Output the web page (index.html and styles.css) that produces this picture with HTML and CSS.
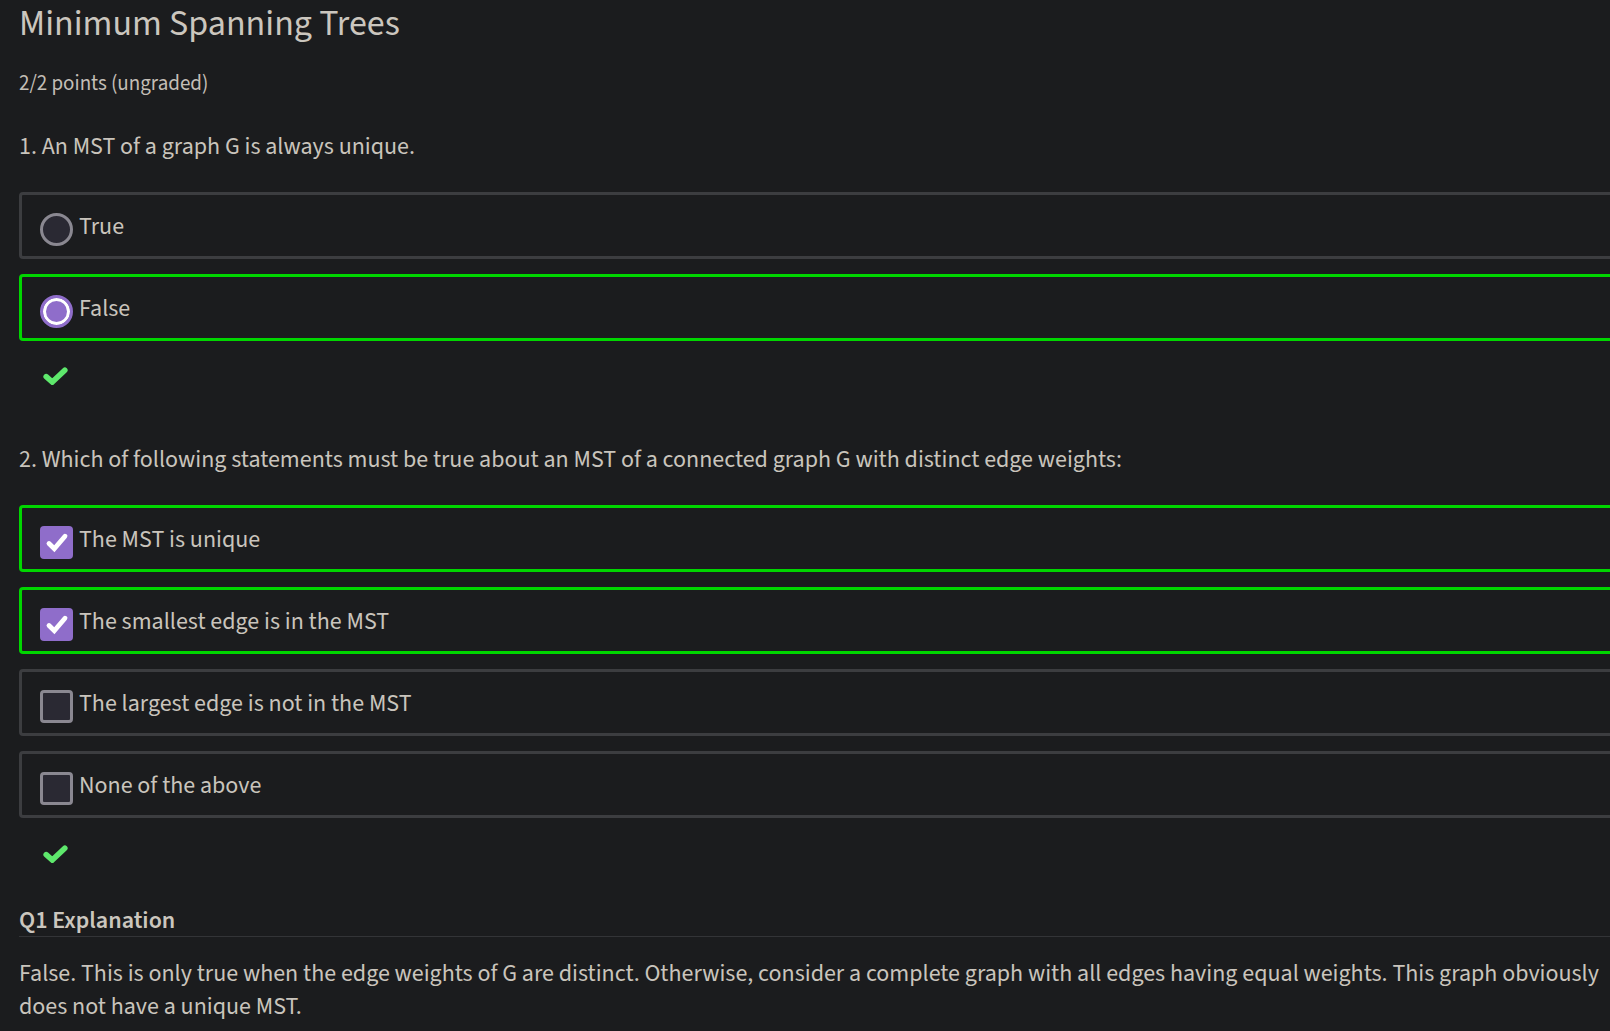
FILE: index.html
```html
<!DOCTYPE html>
<html lang="en">
<head>
<meta charset="utf-8">
<title>Minimum Spanning Trees</title>
<link rel="stylesheet" href="styles.css">
</head>
<body>
<main class="page">
  <h1 class="title">Minimum Spanning Trees</h1>
  <div class="points">2/2 points (ungraded)</div>

  <section class="question">
    <div class="prompt">1. An MST of a graph G is always unique.</div>
    <div class="options">
      <label class="option">
        <span class="radio"></span>
        <span class="option-text">True</span>
      </label>
      <label class="option option-correct">
        <span class="radio radio-on"></span>
        <span class="option-text">False</span>
      </label>
    </div>
    <div class="result">
      <svg class="ok" width="25" height="18" viewBox="0 0 25 18"><path d="M3.2 9.6 L9.3 15 L21.8 3.2" fill="none" stroke="#5ee86c" stroke-width="5.6" stroke-linecap="round" stroke-linejoin="miter"/></svg>
    </div>
  </section>

  <section class="question question-second">
    <div class="prompt">2. Which of following statements must be true about an MST of a connected graph G with distinct edge weights:</div>
    <div class="options">
      <label class="option option-correct">
        <span class="box box-on"><svg width="33" height="33" viewBox="0 0 33 33"><path d="M9 17.5 L14.3 22.8 L25 10.2" fill="none" stroke="#fff" stroke-width="4.8" stroke-linecap="round" stroke-linejoin="miter"/></svg></span>
        <span class="option-text">The MST is unique</span>
      </label>
      <label class="option option-correct">
        <span class="box box-on"><svg width="33" height="33" viewBox="0 0 33 33"><path d="M9 17.5 L14.3 22.8 L25 10.2" fill="none" stroke="#fff" stroke-width="4.8" stroke-linecap="round" stroke-linejoin="miter"/></svg></span>
        <span class="option-text">The smallest edge is in the MST</span>
      </label>
      <label class="option">
        <span class="box"></span>
        <span class="option-text">The largest edge is not in the MST</span>
      </label>
      <label class="option">
        <span class="box"></span>
        <span class="option-text">None of the above</span>
      </label>
    </div>
    <div class="result result-last">
      <svg class="ok" width="25" height="18" viewBox="0 0 25 18"><path d="M3.2 9.6 L9.3 15 L21.8 3.2" fill="none" stroke="#5ee86c" stroke-width="5.6" stroke-linecap="round" stroke-linejoin="miter"/></svg>
    </div>
  </section>

  <section class="explain">
    <h2 class="explain-title">Q1 Explanation</h2>
    <p class="explain-text">False. This is only true when the edge weights of G are distinct. Otherwise, consider a complete graph with all edges having equal weights. This graph obviously does not have a unique MST.</p>
  </section>
</main>
</body>
</html>
```
FILE: styles.css
```css
html, body {
  margin: 0;
  padding: 0;
  overflow: hidden;
  background: #1b1c1e;
}

body {
  font-family: "Source Sans 3", Lato, "Liberation Sans", sans-serif;
  color: #c9c4bc;
  font-size: 24px;
}

.page {
  width: 1625px;
  padding: 0 0 0 19px;
}

.title {
  margin: 2px 0 0;
  font-size: 36px;
  line-height: 44px;
  font-weight: 400;
  color: #cbc6be;
}

.points {
  margin-top: 21px;
  font-size: 21px;
  line-height: 32px;
  color: #c3beb6;
}

.prompt {
  margin-top: 30px;
  line-height: 36px;
}

.question-second .prompt {
  margin-top: 57px;
}

.options {
  margin-top: 27px;
  display: flex;
  flex-direction: column;
  gap: 15px;
}

.question-second .options {
  margin-top: 27px;
}

.option {
  display: flex;
  align-items: flex-start;
  border: 3px solid #3c3d40;
  border-radius: 4px;
  padding: 14px 18px 10px;
  line-height: 36px;
}

.option-correct {
  border-color: #00d600;
}

.radio {
  flex: none;
  box-sizing: border-box;
  width: 33px;
  height: 33px;
  margin-top: 4px;
  margin-right: 6px;
  border-radius: 50%;
  border: 3px solid #8a8891;
  background: #2a2933;
}

.radio-on {
  border-color: #8f6dca;
  background: #8f6dca;
  box-shadow: inset 0 0 0 3px #ffffff;
}

.box {
  flex: none;
  box-sizing: border-box;
  width: 33px;
  height: 33px;
  margin-top: 4px;
  margin-right: 6px;
  border-radius: 4px;
  border: 3px solid #8a8891;
  background: #2a2933;
  display: flex;
}

.box-on {
  border: 0;
  background: #8f6dca;
}

.result {
  margin-top: 26px;
  padding-left: 24px;
  height: 18px;
}

.result-last {
  margin-top: 27px;
}

.ok {
  display: block;
}

.explain-title {
  margin: 43px 0 0;
  font-size: 24px;
  font-weight: 600;
  line-height: 30px;
  border-bottom: 1px solid #333437;
  color: #cbc6be;
}

.explain-text {
  margin: 19.5px 0 0;
  line-height: 33px;
}
```
